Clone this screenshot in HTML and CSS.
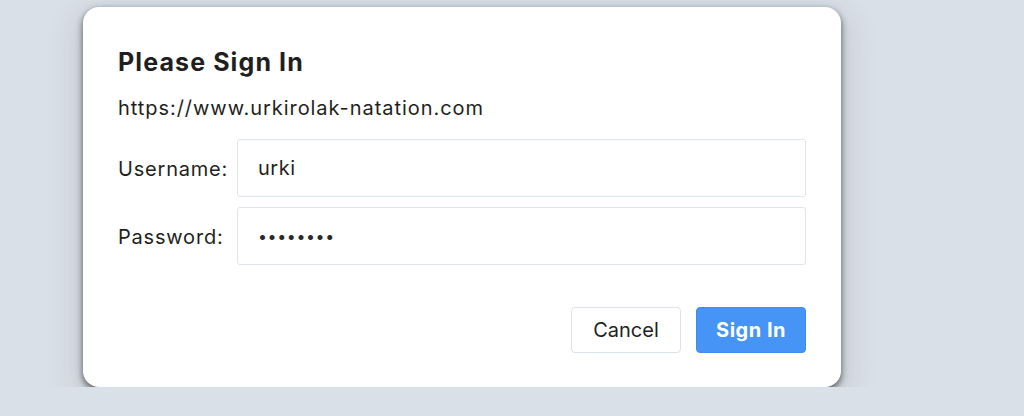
FILE: index.html
```html
<!DOCTYPE html>
<html lang="en">
<head>
<meta charset="utf-8">
<title>Please Sign In</title>
<link rel="stylesheet" href="styles.css">
</head>
<body>
<div class="stage">
  <form class="dialog">
    <h1 class="title">Please Sign In</h1>
    <p class="origin">https://www.urkirolak-natation.com</p>
    <div class="fields">
      <label class="label" for="user">Username:</label>
      <input class="field" id="user" type="text" value="urki">
      <label class="label" for="pass">Password:</label>
      <input class="field field-pass" id="pass" type="password" value="abcdefgh">
    </div>
    <div class="actions">
      <button type="button" class="btn btn-cancel">Cancel</button>
      <button type="button" class="btn btn-primary">Sign In</button>
    </div>
  </form>
</div>
</body>
</html>
```
FILE: styles.css
```css
html, body {
  margin: 0;
  padding: 0;
  background: #dae0e7;
  font-family: Inter, "Noto Sans", "Liberation Sans", sans-serif;
  color: #1f1f21;
}
.stage {
  padding: 7px 0 0 83px;
}
.dialog {
  width: 758px;
  height: 380px;
  box-sizing: border-box;
  background: #ffffff;
  border-radius: 16px;
  padding: 40px 35px 34px 35px;
  display: flex;
  flex-direction: column;
  box-shadow: 0 3px 7px rgba(0, 0, 0, 0.6), 0 10px 30px 8px rgba(50, 60, 75, 0.12);
}
.title {
  margin: 0;
  font-size: 25px;
  line-height: 30px;
  font-weight: 700;
  letter-spacing: 1.1px;
}
.origin {
  margin: 19px 0 0 0;
  font-size: 20px;
  line-height: 24px;
  letter-spacing: 0.95px;
}
.fields {
  margin-top: 19px;
  display: grid;
  grid-template-columns: 110px 1fr;
  column-gap: 9px;
  row-gap: 10px;
  align-items: center;
}
.label {
  font-size: 20px;
  letter-spacing: 0.8px;
  padding-top: 2px;
}
.field {
  height: 58px;
  box-sizing: border-box;
  border: 1px solid #dfe5ec;
  border-radius: 3px;
  padding: 0 20px;
  font-family: inherit;
  font-size: 20px;
  letter-spacing: 0.5px;
  color: #1f1f21;
  background: #fff;
  outline: none;
}
.field-pass {
  font-size: 16px;
  letter-spacing: 0.6px;
  color: #2a2a2c;
}
.actions {
  margin-top: auto;
  display: flex;
  justify-content: flex-end;
  gap: 15px;
}
.btn {
  width: 110px;
  height: 46px;
  border-radius: 4px;
  font-family: inherit;
  font-size: 20px;
}
.btn-cancel {
  background: #fff;
  border: 1px solid #dbe2ea;
  color: #1f1f21;
}
.btn-primary {
  background: #4594f6;
  border: 1px solid #3f8cf0;
  color: #fff;
  font-weight: 700;
  letter-spacing: 0.5px;
}
```
